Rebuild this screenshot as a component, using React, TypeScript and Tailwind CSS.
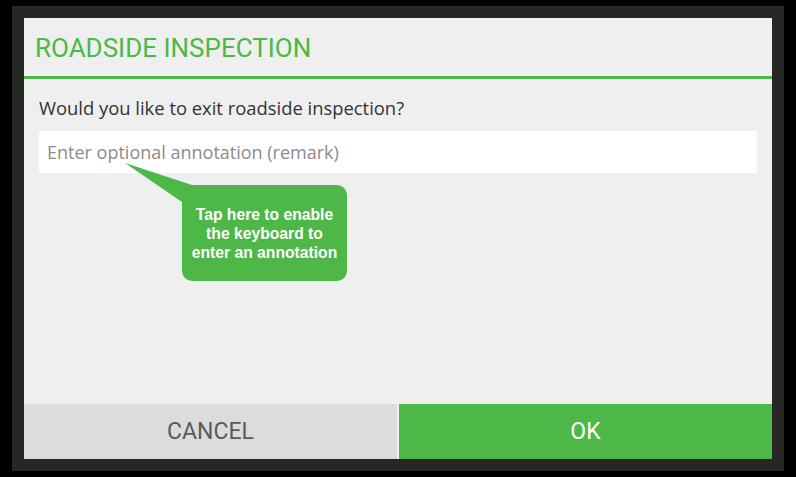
export default function App() {
  return (
    <div className="w-[796px] h-[477px] bg-black px-3 py-1.5">
      <div className="h-full bg-[#262826] p-3">
        <div className="h-full flex flex-col bg-[#efefef]">
          {/* header */}
          <div className="h-[58px] flex items-center pl-[11px] pt-[1px] shrink-0">
            <h1 className="text-[26px] leading-none text-[#4cb848] font-['Roboto',sans-serif]">
              ROADSIDE INSPECTION
            </h1>
          </div>
          <div className="h-[3px] bg-[#4cb848] shrink-0" />

          {/* body */}
          <div className="relative flex-1 px-[15px] pt-[16px] font-['Open_Sans',sans-serif]">
            <p className="text-[18.4px] leading-[26px] text-[#333333]">
              Would you like to exit roadside inspection?
            </p>
            <div className="mt-[10px] h-[42px] bg-white rounded-[2px] flex items-center pl-[8px]">
              <span className="text-[18px] text-[#8c8c8c]">Enter optional annotation (remark)</span>
            </div>

            {/* tooltip pointer */}
            <svg
              className="absolute left-[101px] top-[84px]"
              width="80"
              height="45"
              viewBox="0 0 80 45"
            >
              <polygon points="0,0 67,22 80,32 57,39" fill="#4db748" />
            </svg>
            {/* tooltip bubble */}
            <div className="absolute left-[158px] top-[106px] w-[165px] h-[96px] rounded-[10px] bg-[#4db748] flex items-center justify-center">
              <p className="text-white font-bold text-[15.7px] leading-[19px] text-center font-['Liberation_Sans',Arial,sans-serif]">
                Tap here to enable
                <br />
                the keyboard to
                <br />
                enter an annotation
              </p>
            </div>
          </div>

          {/* actions */}
          <div className="h-[55px] flex gap-[2px] shrink-0 font-['Roboto',sans-serif]">
            <button className="flex-1 bg-[#dcdcdc] text-[#5a5a5a] text-[23px] pt-[1px] flex items-center justify-center">
              CANCEL
            </button>
            <button className="flex-1 bg-[#4db848] text-white text-[23px] pt-[1px] flex items-center justify-center">
              OK
            </button>
          </div>
        </div>
      </div>
    </div>
  );
}
